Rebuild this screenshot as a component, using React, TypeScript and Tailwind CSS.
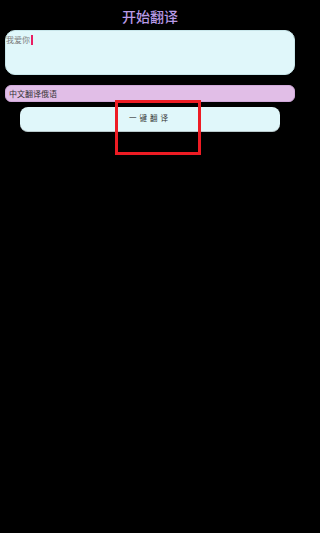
import React from "react";

export default function App() {
  return (
    <div className="min-h-[533px] w-full bg-black">
      <div
        className="relative h-[533px] w-[300px] bg-black"
        style={{ fontFamily: '"Noto Sans", "Noto Sans CJK SC", sans-serif' }}
      >
        {/* Title */}
        <div className="flex h-[30px] items-center justify-center pt-[4px] text-[14px] font-medium leading-none text-[#b89ae6]">
          开始翻译
        </div>

        {/* Input area */}
        <div className="mx-[5px] h-[45px] rounded-[10px] border border-[#c8e6ea] bg-[#e0f7fa] pt-[4px]">
          <div className="flex items-center text-[8px] leading-[10px] text-[#7d7d7d]">
            <span>我爱你</span>
            <span className="ml-[1px] h-[10px] w-[1.5px] bg-[#e91e63]" />
          </div>
        </div>

        {/* Language bar */}
        <div className="mx-[5px] mt-[10px] flex h-[17px] items-center rounded-[6px] border border-[#d1a9da] bg-[#e1bee7] px-[3px] text-[8px] leading-none text-[#333333]">
          中文翻译俄语
        </div>

        {/* Translate button */}
        <div className="mx-[20px] mt-[5px] flex h-[25px] items-center justify-center rounded-[8px] border-b border-[#b9c9cc] bg-[#e0f7fa] text-[7.5px] leading-none tracking-[3px] text-[#333333]">
          一键翻译
        </div>

        {/* Annotation highlight */}
        <div className="absolute left-[115px] top-[100px] h-[55px] w-[86px] border-[3px] border-[#ee1c24]" />
      </div>
    </div>
  );
}
